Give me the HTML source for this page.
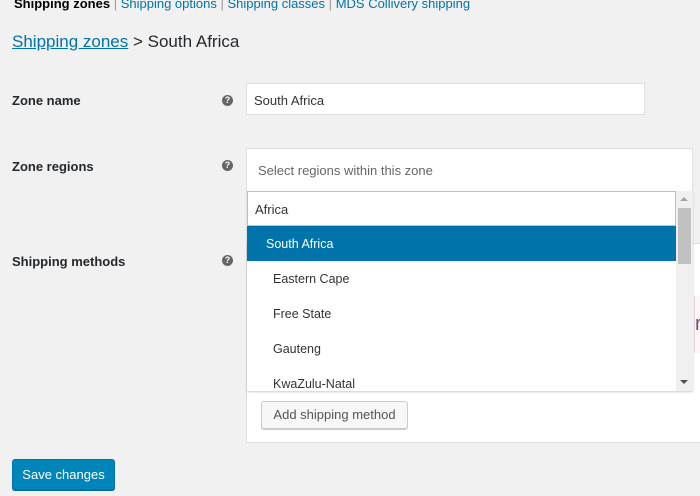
<!DOCTYPE html>
<html><head><style>
body{margin:0;width:700px;height:496px;background:#f1f1f1;font-family:"Liberation Sans",sans-serif;color:#23282d;position:relative;overflow:hidden;font-size:13px}
.a{position:absolute}
.lab{font-weight:bold;font-size:13px;left:12px}
.q{width:11px;height:11px;border-radius:50%;background:#666;color:#fff;font-size:9px;font-weight:bold;text-align:center;line-height:11px;left:222px}
.it{left:247px;width:429px;height:35px;line-height:37px;padding-left:26px;box-sizing:border-box;background:#fff;color:#333;font-size:12.5px}
</style></head><body>
<div class="a" style="left:14px;top:-4px;font-size:13px;"><b style="font-weight:bold;color:#000">Shipping zones</b> <span style="color:#999">|</span> <span style="color:#0073aa">Shipping options</span> <span style="color:#999">|</span> <span style="color:#0073aa">Shipping classes</span> <span style="color:#999">|</span> <span style="color:#0073aa">MDS Collivery shipping</span></div>
<div class="a" style="left:12px;top:32px;font-size:17px;"><span style="color:#0073aa;text-decoration:underline">Shipping zones</span> &gt; South Africa</div>
<div class="a lab" style="top:93px">Zone name</div>
<div class="a q" style="top:95px">?</div>
<div class="a" style="left:246px;top:83px;width:399px;height:32px;background:#fff;border:1px solid #ddd;box-sizing:border-box;padding:9px 7px;font-size:13px;color:#333">South Africa</div>
<div class="a lab" style="top:159px">Zone regions</div>
<div class="a q" style="top:160px">?</div>
<div class="a lab" style="top:254px">Shipping methods</div>
<div class="a q" style="top:255px">?</div>
<div class="a" style="left:246px;top:243px;width:460px;height:200px;background:#fff;border:1px solid #ddd;box-sizing:border-box"></div>
<div class="a" style="left:694px;top:296px;width:10px;height:57px;background:#fbf7f9;border-left:1px solid #e6d6de;color:#7b4a6a;font-size:20px;line-height:57px">r</div>
<div class="a" style="left:246px;top:148px;width:447px;height:44px;background:#fff;border:1px solid #ddd;box-sizing:border-box;padding:14px 11px;color:#666;font-size:13px">Select regions within this zone</div>
<div class="a" style="left:247px;top:191px;width:446px;height:200px;background:#fff;box-shadow:0 1px 2px rgba(0,0,0,.2)"></div>
<div class="a" style="left:247px;top:191px;width:429px;height:35px;border:1px solid #aac4e0;box-sizing:border-box;padding:10px 7px;font-size:13px;color:#333;background:#fff">Africa</div>
<div class="a it" style="top:226px;background:#0073aa;color:#fff;padding-left:19px">South Africa</div>
<div class="a it" style="top:261px">Eastern Cape</div>
<div class="a it" style="top:296px">Free State</div>
<div class="a it" style="top:331px">Gauteng</div>
<div class="a it" style="top:366px;height:25px;overflow:hidden">KwaZulu-Natal</div>
<div class="a" style="left:676px;top:191px;width:17px;height:200px;background:#f0f0f0"></div>
<div class="a" style="left:678px;top:208px;width:13px;height:56px;background:#c1c1c1"></div>
<div class="a" style="left:680px;top:197px;width:0;height:0;border:4px solid transparent;border-bottom:4px solid #a3a3a3;border-top:0"></div>
<div class="a" style="left:680px;top:380px;width:0;height:0;border:4px solid transparent;border-top:4px solid #505050;border-bottom:0"></div>
<div class="a" style="left:261px;top:401px;width:147px;height:28px;background:#f7f7f7;border:1px solid #ccc;border-radius:3px;box-sizing:border-box;text-align:center;line-height:26px;font-size:13px;color:#555;box-shadow:0 1px 0 #ccc">Add shipping method</div>
<div class="a" style="left:12px;top:459px;width:103px;height:31px;background:#0085ba;border:1px solid #0073aa;border-radius:3px;box-sizing:border-box;text-align:center;line-height:29px;font-size:13px;color:#fff;box-shadow:0 1px 0 #006799">Save changes</div>
</body></html>
